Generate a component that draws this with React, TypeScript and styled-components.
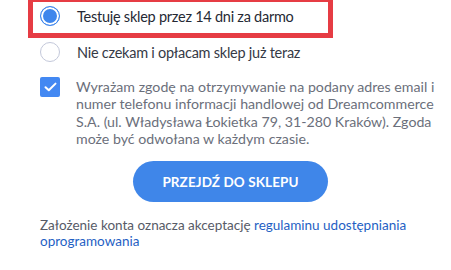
import React from "react";
import styled, { createGlobalStyle } from "styled-components";

const Global = createGlobalStyle`
  html, body { margin: 0; padding: 0; background: #ffffff; }
  body { font-family: Lato, "Noto Sans", sans-serif; -webkit-font-smoothing: antialiased; }
  * { box-sizing: border-box; }
`;

const Page = styled.div`
  width: 451px;
  height: 270px;
  overflow: hidden;
  display: flex;
  flex-direction: column;
`;

const Highlight = styled.div`
  margin: -3px 0 0 28px;
  width: 305px;
  border: 5px solid #e63c44;
  padding: 0 0 3px 7px;
`;

const OptionRow = styled.label<{ $indent?: boolean }>`
  display: flex;
  align-items: center;
  gap: 17px;
  height: 28px;
  padding-left: ${(p) => (p.$indent ? "40px" : "0")};
  font-size: 14.5px;
  letter-spacing: -0.25px;
  color: ${(p) => (p.$indent ? "#363a46" : "#252934")};
`;

const Radio = styled.span<{ $checked?: boolean }>`
  width: 20px;
  height: 20px;
  flex: none;
  border-radius: 50%;
  background: ${(p) => (p.$checked ? "#3f86ec" : "#ffffff")};
  border: ${(p) => (p.$checked ? "1.5px solid #3f86ec" : "1px solid #c3c8da")};
  box-shadow: ${(p) => (p.$checked ? "inset 0 0 0 2px #ffffff" : "none")};
`;

const Content = styled.div`
  padding-left: 40px;
  width: 421px;
  display: flex;
  flex-direction: column;
`;

const ConsentRow = styled.div`
  display: flex;
  align-items: flex-start;
  gap: 16px;
  margin-top: 11px;
`;

const Checkbox = styled.span`
  width: 20px;
  height: 20px;
  flex: none;
  border-radius: 2px;
  background: #4388f2;
  display: flex;
  align-items: center;
  justify-content: center;
`;

const ConsentText = styled.p`
  margin: 1px 0 0;
  font-size: 14.2px;
  line-height: 17.3px;
  color: #6b6f7b;
  white-space: nowrap;
`;

const Button = styled.button`
  align-self: center;
  margin-top: 14px;
  width: 195px;
  height: 41px;
  border: none;
  border-radius: 21px;
  background: #3f86e9;
  color: #ffffff;
  font-family: Lato, "Noto Sans", sans-serif;
  font-weight: 700;
  font-size: 13.5px;
  letter-spacing: 0.1px;
  text-transform: uppercase;
`;

const Footer = styled.p`
  margin: 16px 0 0;
  font-size: 13.5px;
  line-height: 15.5px;
  color: #575b67;
  white-space: nowrap;
`;

const Link = styled.a`
  color: #1f5fc4;
  text-decoration: none;
`;

export default function App() {
  return (
    <Page>
      <Global />
      <Highlight>
        <OptionRow>
          <Radio $checked />
          Testuję sklep przez 14 dni za darmo
        </OptionRow>
      </Highlight>
      <OptionRow $indent>
        <Radio />
        Nie czekam i opłacam sklep już teraz
      </OptionRow>
      <Content>
        <ConsentRow>
          <Checkbox>
            <svg width="13" height="10" viewBox="0 0 13 10" fill="none">
              <path d="M1.5 5.2 L4.8 8.3 L11.5 1.6" stroke="#ffffff" strokeWidth="2" strokeLinecap="round" strokeLinejoin="round" />
            </svg>
          </Checkbox>
          <ConsentText>
            Wyrażam zgodę na otrzymywanie na podany adres email i
            <br />
            numer telefonu informacji handlowej od Dreamcommerce
            <br />
            S.A. (ul. Władysława Łokietka 79, 31-280 Kraków). Zgoda
            <br />
            może być odwołana w każdym czasie.
          </ConsentText>
        </ConsentRow>
        <Button>Przejdź do sklepu</Button>
        <Footer>
          Założenie konta oznacza akceptację <Link href="#">regulaminu udostępniania</Link>
          <br />
          <Link href="#">oprogramowania</Link>
        </Footer>
      </Content>
    </Page>
  );
}
